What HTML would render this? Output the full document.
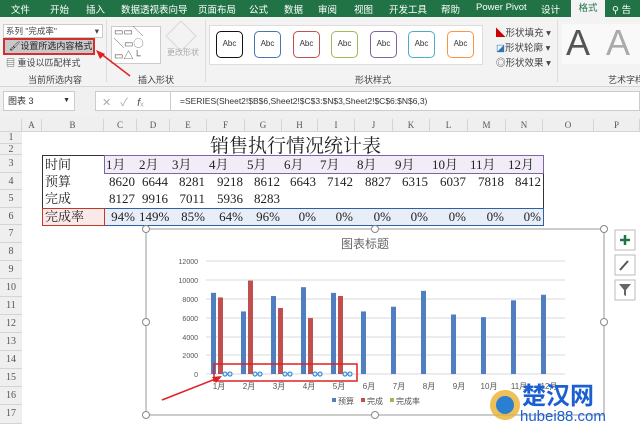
<!DOCTYPE html>
<html><head><meta charset="utf-8"><style>
*{margin:0;padding:0;box-sizing:border-box}
body{width:640px;height:424px;overflow:hidden;background:#fff;font-family:"Liberation Sans","Noto Sans CJK SC",sans-serif;position:relative}
.a{position:absolute;white-space:nowrap}
.tab{position:absolute;top:2px;font-size:9.5px;color:#fff}
.g{color:#444;font-size:9px}
.abc{position:absolute;top:31px;width:27px;height:27px;border-radius:5px;border:1.5px solid;font-size:8px;text-align:center;line-height:24px;background:#fff;color:#333}
.ch{position:absolute;top:119px;height:13px;font-size:9px;color:#555;text-align:center;line-height:13px;font-family:"Liberation Serif",serif;border-right:1px solid #d4d4d4}
.rh{position:absolute;left:0;width:22px;font-size:10px;color:#555;text-align:center;font-family:"Liberation Serif",serif;border-bottom:1px solid #d4d4d4;background:#efefef}
.c{position:absolute;font-size:13px;font-family:"Liberation Serif","Noto Serif CJK SC",serif;color:#222;border-right:1px solid #333;border-bottom:1px solid #333;line-height:17px;padding:0 2px}
</style></head><body>
<div class="a" style="left:0;top:0;width:640px;height:17px;background:#217346"></div>
<div class="tab" style="left:11px">文件</div><div class="tab" style="left:50px">开始</div><div class="tab" style="left:86px">插入</div>
<div class="tab" style="left:121px">数据透视表向导</div><div class="tab" style="left:198px">页面布局</div><div class="tab" style="left:249px">公式</div>
<div class="tab" style="left:284px">数据</div><div class="tab" style="left:318px">审阅</div><div class="tab" style="left:354px">视图</div>
<div class="tab" style="left:389px">开发工具</div><div class="tab" style="left:441px">帮助</div><div class="tab" style="left:476px">Power Pivot</div>
<div class="tab" style="left:541px">设计</div>
<div class="a" style="left:571px;top:0;width:34px;height:17px;background:#f3f3f3;color:#217346;font-size:9.5px;text-align:center;line-height:17px">格式</div>
<div class="tab" style="left:612px">⚲ 告诉</div>
<div class="a" style="left:0;top:17px;width:640px;height:70px;background:#f3f3f3;border-bottom:1px solid #d6d6d6"></div>
<div class="a" style="left:3px;top:24px;width:100px;height:14px;background:#fff;border:1px solid #ccc;font-size:8.5px;color:#444;padding-left:2px;line-height:12px">系列 "完成率"<span style="float:right;padding-right:3px">▾</span></div>
<div class="a" style="left:3px;top:38px;width:92px;height:17px;background:#c8c8c8;border:2px solid #d23030;font-size:9px;color:#222;line-height:13px;padding-left:4px">🖌设置所选内容格式</div>
<div class="a g" style="left:6px;top:56px">▤ 重设以匹配样式</div>
<div class="a g" style="left:28px;top:73px">当前所选内容</div>
<div class="a" style="left:106px;top:20px;width:1px;height:62px;background:#ddd"></div>
<div class="a" style="left:111px;top:26px;width:50px;height:38px;border:1px solid #ccc;background:#fff;font-size:10px;color:#555;line-height:12px;padding-left:2px">▭▭╲<br>╲▭◯<br>▭△└</div>
<div class="a" style="left:170px;top:25px;width:22px;height:22px;border:1px solid #bbb;transform:rotate(45deg);opacity:.5"></div>
<div class="a" style="left:167px;top:47px;font-size:8px;color:#aaa">更改形状</div>
<div class="a g" style="left:138px;top:73px">插入形状</div>
<div class="a" style="left:205px;top:20px;width:1px;height:62px;background:#ddd"></div>
<div class="a" style="left:209px;top:25px;width:274px;height:40px;background:#fff;border:1px solid #ddd"></div>
<div class="abc" style="left:216px;border-color:#111">Abc</div>
<div class="abc" style="left:254px;border-color:#4a74b0">Abc</div>
<div class="abc" style="left:293px;border-color:#c0504d">Abc</div>
<div class="abc" style="left:331px;border-color:#9bbb59">Abc</div>
<div class="abc" style="left:370px;border-color:#8064a2">Abc</div>
<div class="abc" style="left:408px;border-color:#4bacc6">Abc</div>
<div class="abc" style="left:447px;border-color:#f79646">Abc</div>
<div class="a g" style="left:355px;top:73px">形状样式</div>
<div class="a g" style="left:496px;top:25px;font-size:9.5px"><span style="color:#c00">◣</span>形状填充 ▾</div>
<div class="a g" style="left:496px;top:40px;font-size:9.5px"><span style="color:#2e75b6">◪</span>形状轮廓 ▾</div>
<div class="a g" style="left:496px;top:55px;font-size:9.5px">◎形状效果 ▾</div>
<div class="a" style="left:557px;top:20px;width:1px;height:62px;background:#ddd"></div>
<div class="a" style="left:562px;top:24px;width:78px;height:40px;background:#f9f9f9"></div>
<div class="a" style="left:566px;top:22px;font-size:36px;color:#555">A</div>
<div class="a" style="left:606px;top:22px;font-size:36px;color:#aaa">A</div>
<div class="a g" style="left:608px;top:73px">艺术字样</div>
<div class="a" style="left:0;top:87px;width:640px;height:29px;background:#f0f0f0"></div>
<div class="a" style="left:3px;top:91px;width:72px;height:20px;background:#fff;border:1px solid #ccc;font-size:9px;color:#333;line-height:18px;padding-left:4px">图表 3<span style="float:right;padding-right:4px;font-size:7px">▼</span></div>
<div class="a" style="left:95px;top:91px;width:545px;height:20px;background:#fff;border:1px solid #ccc"></div>
<div class="a" style="left:102px;top:94px;font-size:11px;color:#aaa">✕ &nbsp; ✓ &nbsp; <i style="color:#555">f</i>ₓ</div>
<div class="a" style="left:170px;top:91px;width:1px;height:20px;background:#ccc"></div>
<div class="a" style="left:180px;top:96px;font-size:8.5px;color:#333">=SERIES(Sheet2!$B$6,Sheet2!$C$3:$N$3,Sheet2!$C$6:$N$6,3)</div>
<div class="a" style="left:0;top:116px;width:640px;height:16px;background:#efefef;border-bottom:1px solid #d4d4d4"></div>
<div class="ch" style="left:0;width:22px"></div>
<div class="ch" style="left:22px;width:20px">A</div><div class="ch" style="left:42px;width:62px">B</div><div class="ch" style="left:104px;width:33px">C</div>
<div class="ch" style="left:137px;width:33px">D</div><div class="ch" style="left:170px;width:37px">E</div><div class="ch" style="left:207px;width:38px">F</div>
<div class="ch" style="left:245px;width:37px">G</div><div class="ch" style="left:282px;width:36px">H</div><div class="ch" style="left:318px;width:37px">I</div>
<div class="ch" style="left:355px;width:38px">J</div><div class="ch" style="left:393px;width:37px">K</div><div class="ch" style="left:430px;width:38px">L</div>
<div class="ch" style="left:468px;width:38px">M</div><div class="ch" style="left:506px;width:37px">N</div><div class="ch" style="left:543px;width:51px">O</div>
<div class="ch" style="left:594px;width:46px">P</div>
<div class="rh" style="top:132px;height:12px">1</div><div class="rh" style="top:144px;height:11px">2</div>
<div class="rh" style="top:155px;height:18px;line-height:18px">3</div><div class="rh" style="top:173px;height:17px;line-height:17px">4</div>
<div class="rh" style="top:190px;height:18px;line-height:18px">5</div><div class="rh" style="top:208px;height:17px;line-height:17px">6</div>
<div class="rh" style="top:225px;height:18px;line-height:18px">7</div><div class="rh" style="top:243px;height:18px;line-height:18px">8</div>
<div class="rh" style="top:261px;height:18px;line-height:18px">9</div><div class="rh" style="top:279px;height:18px;line-height:18px">10</div>
<div class="rh" style="top:297px;height:18px;line-height:18px">11</div><div class="rh" style="top:315px;height:18px;line-height:18px">12</div>
<div class="rh" style="top:333px;height:18px;line-height:18px">13</div><div class="rh" style="top:351px;height:18px;line-height:18px">14</div>
<div class="rh" style="top:369px;height:18px;line-height:18px">15</div><div class="rh" style="top:387px;height:18px;line-height:18px">16</div>
<div class="rh" style="top:405px;height:19px;line-height:18px">17</div>
<div class="a" style="left:210px;top:131px;font-size:19px;font-family:'Liberation Serif','Noto Serif CJK SC',serif;color:#222">销售执行情况统计表</div>
<div id="t"></div>
<script>
var cols=[42,104,137,170,207,245,282,318,355,393,430,468,506,543];
var rows=[155,173,190,208,225];
var data=[["时间","1月","2月","3月","4月","5月","6月","7月","8月","9月","10月","11月","12月"],
["预算","8620","6644","8281","9218","8612","6643","7142","8827","6315","6037","7818","8412"],
["完成","8127","9916","7011","5936","8283","","","","","","",""],
["完成率","94%","149%","85%","64%","96%","0%","0%","0%","0%","0%","0%","0%"]];
var h="";
for(var r=0;r<4;r++)for(var c=0;c<13;c++){
var bg=r==0&&c>0?"#f1ecf7":(r==3&&c>0?"#e8eef8":(r==3?"#fbe9e9":"#fff"));
var al=(c>0&&r>0)?"right":"left";
h+='<div class="c" style="left:'+cols[c]+'px;top:'+rows[r]+'px;width:'+(cols[c+1]-cols[c]+1)+'px;height:'+(rows[r+1]-rows[r]+1)+'px;background:'+bg+';text-align:'+al+';border-left:'+(c==0?'1px solid #333':'0')+';border-top:'+(r==0?'1px solid #333':'0')+'">'+data[r][c]+'</div>';}
document.getElementById("t").innerHTML=h;
</script>
<div class="a" style="left:104px;top:155px;width:440px;height:19px;border:1.5px solid #8064a2"></div>
<div class="a" style="left:104px;top:208px;width:440px;height:18px;border:1.5px solid #2e5fa8"></div>
<div class="a" style="left:42px;top:208px;width:63px;height:18px;border:1.5px solid #c0392b"></div>
<svg class="a" style="left:0;top:0" width="640" height="424">
<rect x="146" y="229" width="458" height="186" fill="#fff" stroke="#999"/>
<g fill="#fff" stroke="#888"><circle cx="146" cy="229" r="3.5"/><circle cx="375" cy="229" r="3.5"/><circle cx="604" cy="229" r="3.5"/><circle cx="146" cy="322" r="3.5"/><circle cx="604" cy="322" r="3.5"/><circle cx="146" cy="415" r="3.5"/><circle cx="375" cy="415" r="3.5"/></g>
<text x="365" y="248" font-size="12" fill="#666" text-anchor="middle" font-family="Liberation Sans,Noto Sans CJK SC,sans-serif">图表标题</text>
<g stroke="#d9d9d9"><line x1="206" x2="565" y1="261" y2="261"/><line x1="206" x2="565" y1="280" y2="280"/><line x1="206" x2="565" y1="299" y2="299"/><line x1="206" x2="565" y1="318" y2="318"/><line x1="206" x2="565" y1="337" y2="337"/><line x1="206" x2="565" y1="355" y2="355"/><line x1="206" x2="565" y1="374" y2="374"/></g>
<g font-size="7" fill="#555" text-anchor="end" font-family="Liberation Sans,sans-serif"><text x="198" y="264">12000</text><text x="198" y="283">10000</text><text x="198" y="302">8000</text><text x="198" y="321">6000</text><text x="198" y="340">4000</text><text x="198" y="358">2000</text><text x="198" y="377">0</text></g>
<g fill="#4f7fc0" id="b"></g><g fill="#c0504d" id="rr"></g>
<g fill="none" stroke="#3a8fd8" stroke-width="1.2"><circle cx="225" cy="374" r="2"/><circle cx="230" cy="374" r="2"/><circle cx="255" cy="374" r="2"/><circle cx="260" cy="374" r="2"/><circle cx="285" cy="374" r="2"/><circle cx="290" cy="374" r="2"/><circle cx="315" cy="374" r="2"/><circle cx="320" cy="374" r="2"/><circle cx="345" cy="374" r="2"/><circle cx="350" cy="374" r="2"/></g>
<g font-size="8" fill="#555" text-anchor="middle" font-family="Liberation Sans,Noto Sans CJK SC,sans-serif" id="xl"></g>
<rect x="214" y="364" width="143" height="17" fill="none" stroke="#e02020" stroke-width="1.5"/>
<line x1="162" y1="400" x2="218" y2="378" stroke="#e02020" stroke-width="1.5"/><polygon points="222,376 212,377 216,383" fill="#e02020"/>
<line x1="130" y1="76" x2="100" y2="53" stroke="#e02020" stroke-width="1.5"/><polygon points="96,50 100,59 105,54" fill="#e02020"/>
<g font-size="8" fill="#555" font-family="Liberation Sans,Noto Sans CJK SC,sans-serif"><rect x="332" y="398" width="4" height="4" fill="#4f7fc0"/><text x="338" y="404">预算</text><rect x="361" y="398" width="4" height="4" fill="#c0504d"/><text x="367" y="404">完成</text><rect x="390" y="398" width="4" height="4" fill="#9bbb59"/><text x="396" y="404">完成率</text></g>
<g fill="#fff" stroke="#bbb"><rect x="615" y="230" width="20" height="20"/><rect x="615" y="255" width="20" height="20"/><rect x="615" y="280" width="20" height="20"/></g>
<path d="M625 235v10M620 240h10" stroke="#217346" stroke-width="2.5"/>
<path d="M620 270l8-9" stroke="#555" stroke-width="2"/>
<path d="M619 284h12l-5 6v6l-2-1v-5z" fill="#666"/>
<circle cx="505" cy="405" r="15" fill="#e8b030" opacity=".8"/><circle cx="505" cy="405" r="9" fill="#2a7fd0"/>
<text x="522" y="404" font-size="24" font-weight="bold" fill="#1b5fd0" font-family="Noto Sans CJK SC,sans-serif">楚汉网</text>
<text x="520" y="421" font-size="15" fill="#1b5fd0" font-family="Liberation Sans,sans-serif">hubei88.com</text>
</svg>
<script>
var bud=[8620,6644,8281,9218,8612,6643,7142,8827,6315,6037,7818,8412],don=[8127,9916,7011,5936,8283];
var b="",r="",x="";
for(var i=0;i<12;i++){var c=219+30*i,hh=bud[i]*0.00942;
b+='<rect x="'+(c-8)+'" y="'+(374-hh)+'" width="5" height="'+hh+'"/>';
if(i<5){var h2=don[i]*0.00942;r+='<rect x="'+(c-1)+'" y="'+(374-h2)+'" width="5" height="'+h2+'"/>';}
x+='<text x="'+c+'" y="389">'+(i+1)+'月</text>';}
document.getElementById("b").innerHTML=b;document.getElementById("rr").innerHTML=r;document.getElementById("xl").innerHTML=x;
</script>
</body></html>
